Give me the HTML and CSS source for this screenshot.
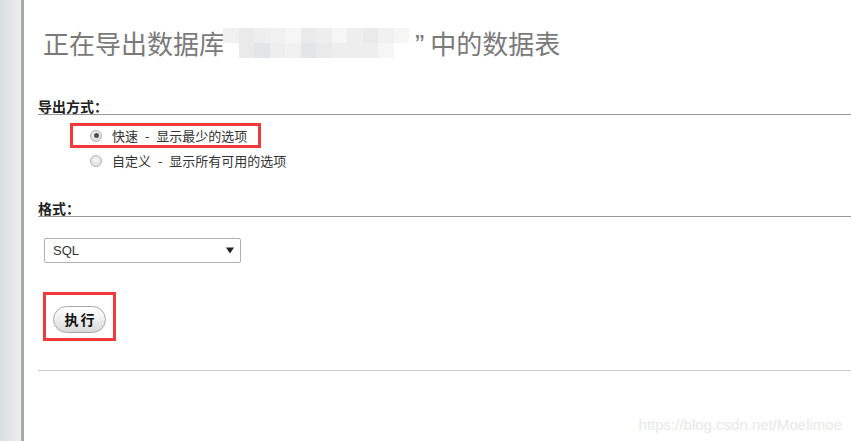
FILE: index.html
```html
<!DOCTYPE html>
<html lang="zh-CN">
<head>
<meta charset="utf-8">
<title>导出</title>
<link rel="stylesheet" href="styles.css">
</head>
<body>
<div class="sidebar"></div>
<main class="main">
  <h1 class="title">正在导出数据库<span class="mosaic" aria-hidden="true"><i class="s2"></i><i class="s4"></i><i class="s3"></i><i class="s2"></i><i class="s1"></i><i class="s4"></i><i class="s3"></i><i class="s1"></i><i class="s3"></i><i class="s4"></i><i class="s2"></i><i class="s1"></i><i class="s0"></i><i class="s4"></i><i class="s5"></i><i class="s3"></i><i class="s2"></i><i class="s5"></i><i class="s4"></i><i class="s3"></i><i class="s3"></i><i class="s3"></i><i class="s1"></i><i class="s0"></i></span><span class="quote">”</span>中的数据表</h1>

  <h3 class="section-head">导出方式：</h3>
  <div class="options">
    <label class="opt marked"><span class="radio checked"></span><span class="opt-text">快速 - 显示最少的选项</span></label>
    <label class="opt"><span class="radio"></span><span class="opt-text">自定义 - 显示所有可用的选项</span></label>
  </div>

  <h3 class="section-head format-head">格式：</h3>
  <div class="select">
    <span class="select-value">SQL</span>
    <svg class="select-arrow" width="8" height="7" viewBox="0 0 8 7"><path d="M0 0.5H8L4 6.5Z" fill="#222"/></svg>
  </div>

  <div class="go-box">
    <button class="go-btn" type="button">执行</button>
  </div>

  <hr class="rule">
</main>
<div class="watermark">https://blog.csdn.net/Moelimoe</div>
</body>
</html>
```

FILE: styles.css
```css
html, body {
  margin: 0;
  padding: 0;
  background: #ffffff;
}

body {
  display: flex;
  min-height: 100vh;
  font-family: "Noto Sans CJK SC", "Liberation Sans", sans-serif;
  color: #333333;
  position: relative;
  overflow: hidden;
}

.sidebar {
  width: 21px;
  flex: 0 0 21px;
  background: linear-gradient(to right, #dcdfe1, #eceeef);
  border-right: 3px solid #a9a9a9;
}

.main {
  flex: 1;
  padding: 0 0 0 14px;
}

.title {
  margin: 28px 0 0 0;
  padding-left: 5px;
  height: 30px;
  font-size: 26px;
  line-height: 30px;
  font-weight: normal;
  color: #7a7a7a;
  white-space: nowrap;
}

.mosaic {
  display: inline-grid;
  grid-template-columns: repeat(12, 15.5px);
  grid-auto-rows: 15px;
  vertical-align: top;
  margin: 0 0 0 -2px;
}

.mosaic i { display: block; }
.mosaic .s0 { background: #ffffff; }
.mosaic .s1 { background: #f6f6f6; }
.mosaic .s2 { background: #f1f1f1; }
.mosaic .s3 { background: #eeeeee; }
.mosaic .s4 { background: #eaeaea; }
.mosaic .s5 { background: #e4e5e6; }

.quote {
  font-family: "Liberation Sans", Arial, sans-serif;
  font-size: 28px;
  line-height: 0;
  margin: 0 6px 0 6px;
}

.section-head {
  margin: 40px 0 0 0;
  font-size: 14px;
  line-height: 16px;
  font-weight: bold;
  color: #222222;
  border-bottom: 1px solid #9a9a9a;
}

.options {
  margin-top: 8px;
  display: flex;
  flex-direction: column;
  align-items: flex-start;
}

.opt {
  display: flex;
  align-items: center;
  gap: 10px;
  height: 19px;
  margin-left: 32px;
  padding: 0 11px 0 17px;
  border: 3px solid transparent;
  font-size: 13px;
  color: #333333;
  word-spacing: 4px;
}

.opt.marked {
  border-color: #f23a3a;
}

.radio {
  box-sizing: border-box;
  width: 12px;
  height: 12px;
  flex: 0 0 12px;
  border-radius: 50%;
  border: 1px solid #b4b4b4;
  background: radial-gradient(circle at 50% 40%, #f8f8f8, #d6d6d6);
  display: flex;
  align-items: center;
  justify-content: center;
}

.radio.checked::after {
  content: "";
  width: 5px;
  height: 5px;
  border-radius: 50%;
  background: #505050;
}

.format-head {
  margin-top: 27px;
}

.select {
  box-sizing: border-box;
  margin: 21px 0 0 6px;
  width: 197px;
  height: 25px;
  border: 1px solid #b0b0b0;
  border-radius: 2px;
  display: flex;
  align-items: center;
  justify-content: space-between;
  padding: 0 6px 0 8px;
  font-family: "Liberation Sans", Arial, sans-serif;
  font-size: 13px;
  color: #333333;
}

.go-box {
  box-sizing: border-box;
  margin: 29px 0 0 5px;
  width: 73px;
  height: 49px;
  border: 3px solid #f23a3a;
  padding: 11px 0 0 7px;
}

.go-btn {
  box-sizing: border-box;
  width: 53px;
  height: 27px;
  margin: 0;
  padding: 0;
  border: 1px solid #a8a8a8;
  border-radius: 14px;
  background: linear-gradient(to bottom, #ffffff 0%, #f0f0f0 45%, #d8d8d8 100%);
  font-family: "Noto Sans CJK SC", sans-serif;
  font-size: 14px;
  font-weight: bold;
  letter-spacing: 2px;
  text-indent: 2px;
  color: #111111;
  line-height: 25px;
}

.rule {
  margin: 29px 0 0 0;
  border: 0;
  border-top: 1px solid #c8c8c8;
  height: 0;
}

.watermark {
  position: absolute;
  right: 9px;
  bottom: 8px;
  font-family: "Liberation Sans", Arial, sans-serif;
  font-size: 15px;
  color: #e8e8e8;
}
```
